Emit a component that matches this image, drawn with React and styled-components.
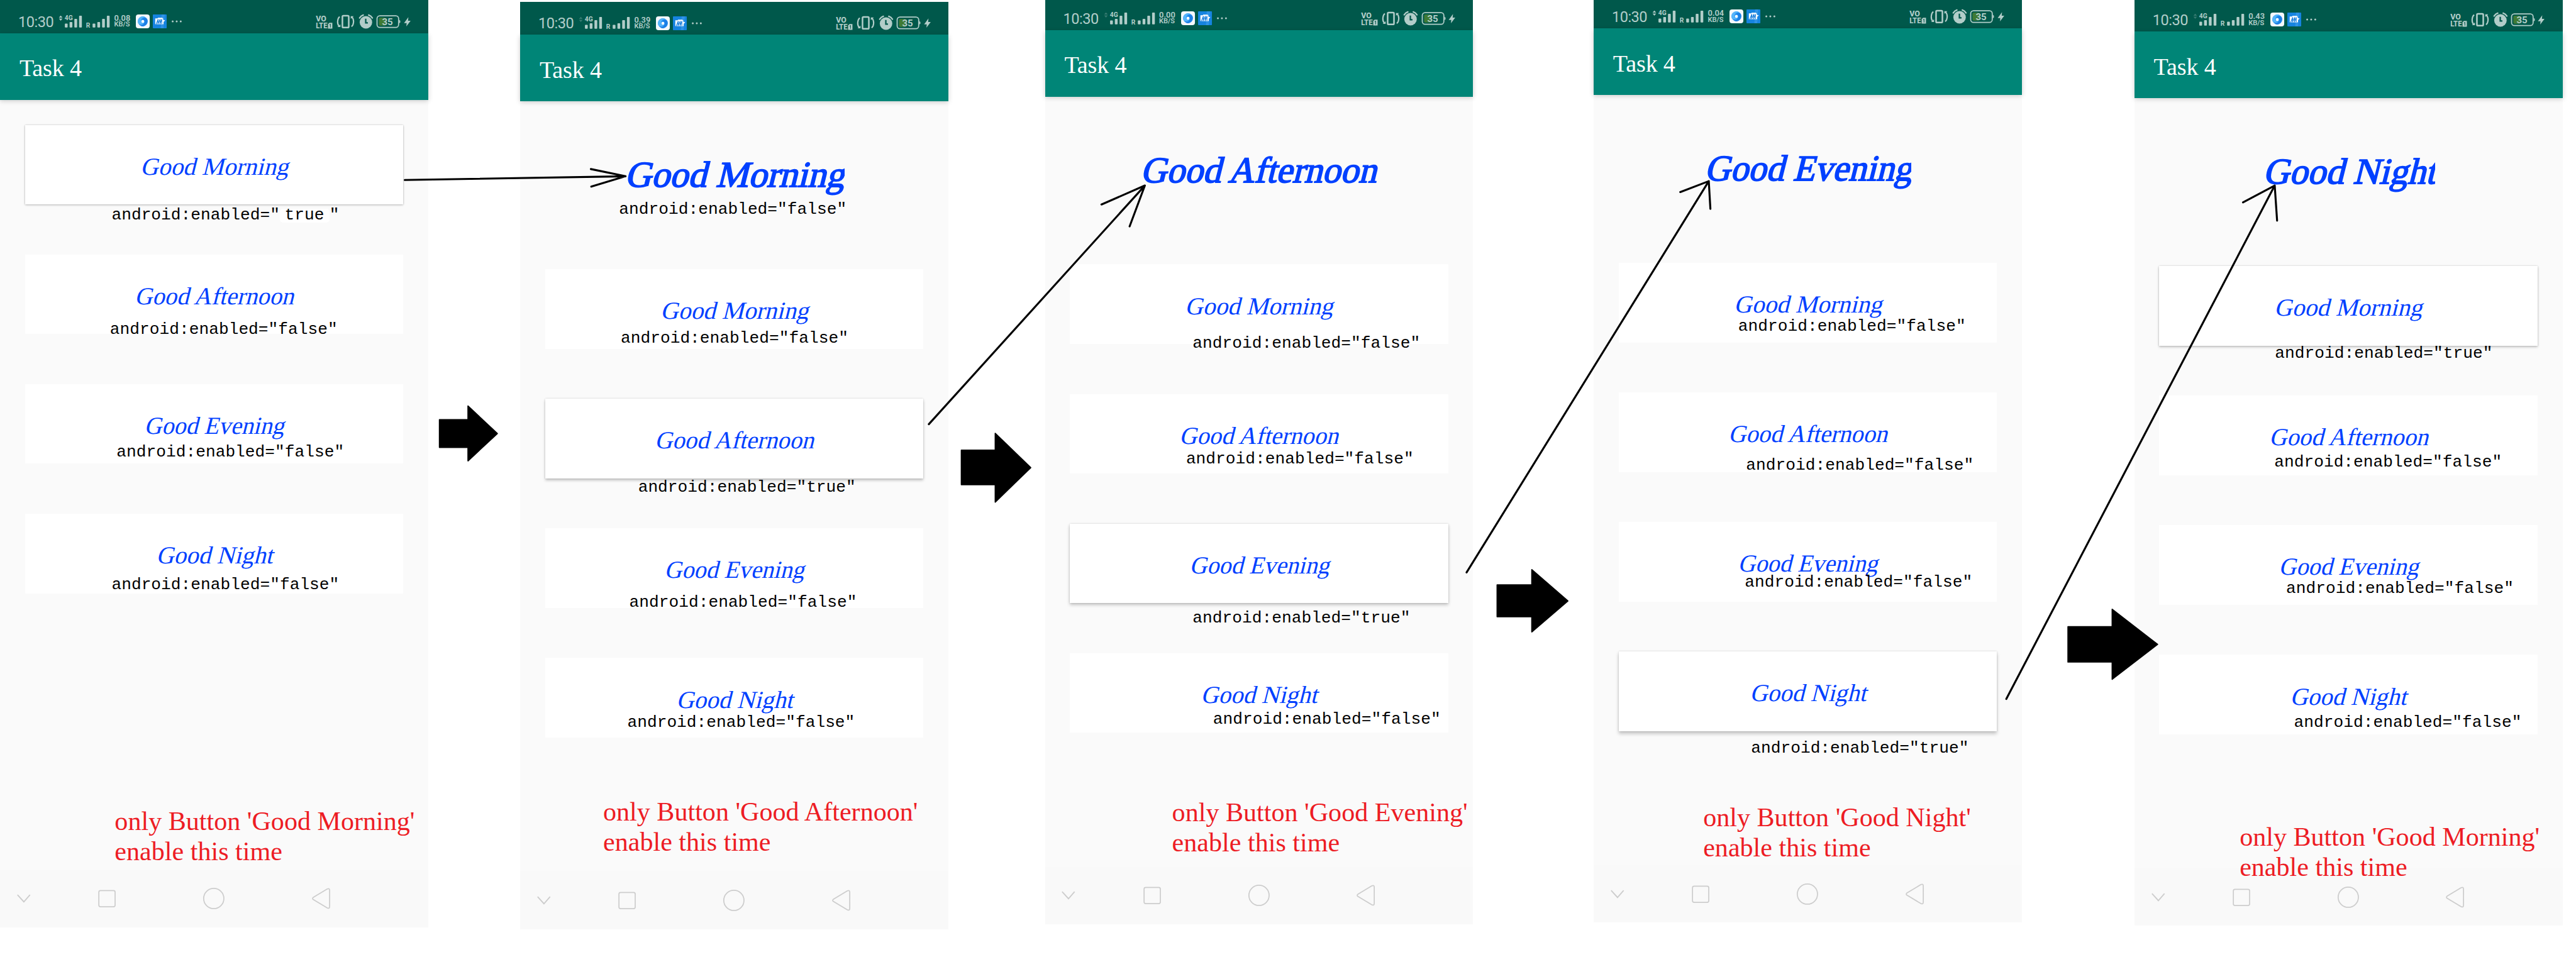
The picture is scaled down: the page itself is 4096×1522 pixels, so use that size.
import React from "react";
import styled, { createGlobalStyle } from "styled-components";

// Every length below is written in design pixels of a 6498px wide board.
const SCALE = 4096 / 6498;
const u = (n) => `${(n * SCALE).toFixed(3)}px`;

const GlobalStyle = createGlobalStyle`
  html, body { margin: 0; padding: 0; background: #fff; }
  * { box-sizing: border-box; }
`;

const serif = `"Liberation Serif", "Times New Roman", serif`;
const mono = `"Liberation Mono", "Courier New", monospace`;
const sans = `Roboto, "Liberation Sans", sans-serif`;
const statusInk = "#b2cdc9";
const statusBg = "#00584b";

const Board = styled.main`
  position: relative;
  width: 4096px;
  height: 1522px;
  overflow: hidden;
  background: #fff;
`;

const PhoneRow = styled.div`
  display: flex;
  align-items: flex-start;
`;

const Phone = styled.section`
  display: flex;
  flex-direction: column;
  flex: none;
  width: ${u(1080)};
  height: ${u(2340)};
  margin-left: ${(p) => u(p.$gap)};
  margin-top: ${(p) => u(p.$rise)};
  background: #fafafa;
`;

const StatusBar = styled.header`
  display: flex;
  flex: none;
  align-items: center;
  justify-content: space-between;
  height: ${u(84)};
  padding: ${u(24)} ${u(44)} 0 ${u(46)};
  background: ${statusBg};
  color: ${statusInk};
  font-family: ${sans};
`;

const StatusGroup = styled.div`
  display: flex;
  align-items: center;
`;

const Clock = styled.span`
  width: ${u(102)};
  font-size: ${u(37.4)};
  line-height: ${u(40)};
  letter-spacing: ${u(-0.8)};
  white-space: nowrap;
  padding-top: ${u(4)};
`;

const Speed = styled.div`
  display: flex;
  flex-direction: column;
  width: ${u(45)};
  margin-left: ${u(10)};
  font-weight: 600;
  white-space: nowrap;
`;

const SpeedValue = styled.span`
  font-size: ${u(20.5)};
  line-height: ${u(18)};
`;

const SpeedUnit = styled.span`
  font-size: ${u(17.6)};
  line-height: ${u(17)};
`;

const Glyph = styled.svg`
  display: block;
  flex: none;
  overflow: visible;
  width: ${(p) => u(p.$w)};
  height: ${(p) => u(p.$h || 36)};
  margin-left: ${(p) => u(p.$ml || 0)};
`;

const AppBar = styled.div`
  display: flex;
  flex: none;
  align-items: center;
  height: ${u(168)};
  padding: ${u(8)} 0 0 ${u(49)};
  background: #008577;
  box-shadow: 0 ${u(3)} ${u(12)} rgba(0, 0, 0, 0.2);
`;

const Title = styled.h1`
  margin: 0;
  color: #fff;
  font: 400 ${u(60.5)} / 1.107 ${serif};
  letter-spacing: ${u(-0.3)};
`;

const Content = styled.div`
  display: flex;
  flex: 1;
  flex-direction: column;
  align-items: center;
  gap: ${u(126)};
  padding-top: ${u(63)};
`;

const Slanted = styled.span`
  display: block;
  color: #0040ff;
  font-family: ${serif};
  line-height: 1.107;
  white-space: nowrap;
`;

const Headline = styled.div`
  display: flex;
  flex: none;
  align-items: center;
  width: ${(p) => u(p.$width)};
  height: ${u(234)};
  padding: ${u(11)} 0 0 ${u(2)};
  overflow: hidden;
`;

const HeadlineText = styled(Slanted)`
  font-size: ${u(92)};
  transform: skewX(-14deg) scaleX(${(p) => p.$stretch});
  transform-origin: 0 80.5%;
  -webkit-text-stroke: ${u(2.8)} #0040ff;
`;

const shadowFor = (lift) =>
  lift
    ? `0 ${u(lift)} ${u(lift + 3)} rgba(0, 0, 0, 0.22), 0 0 ${u(4)} rgba(0, 0, 0, 0.16)`
    : "none";

const GreetingButton = styled.button`
  display: flex;
  flex: none;
  align-items: center;
  justify-content: center;
  width: ${u(954)};
  height: ${u(201)};
  padding: ${u(8)} 0 0;
  border: 0;
  background: #fff;
  box-shadow: ${(p) => shadowFor(p.$lift)};
`;

const ButtonText = styled(Slanted)`
  font-size: ${u(62)};
  transform: skewX(-14deg) scaleX(${(p) => p.$stretch});
  transform-origin: 50% 80.5%;
`;

const NavBar = styled.nav`
  display: flex;
  flex: none;
  align-items: center;
  height: ${u(145)};
  background: #f9f9f9;
`;

const Note = styled.div`
  position: absolute;
  left: ${(p) => u(p.$x - 2)};
  top: ${(p) => u(p.$base - 33)};
  color: #000;
  font: 400 ${u(41.6)} / 1.133 ${mono};
  white-space: pre;
`;

const Patch = styled.span`
  display: inline-block;
  width: ${u(125)};
  padding-left: ${u(12)};
  background: #fff;
  border-radius: ${u(8)};
  line-height: ${u(34)};
`;

const Caption = styled.p`
  position: absolute;
  left: ${(p) => u(p.$x)};
  top: ${(p) => u(p.$base - 59.5)};
  margin: 0;
  color: #ed1c24;
  font: 400 ${u(66.8)} / ${u(76)} ${serif};
  white-space: pre;
`;

const ArrowLayer = styled.svg`
  position: absolute;
  inset: 0;
  width: 4096px;
  height: 1522px;
  pointer-events: none;
`;

const GREETINGS = {
  morning: { text: "Good Morning", stretch: 1.008, width: 556 },
  afternoon: { text: "Good Afternoon", stretch: 0.992, width: 602 },
  evening: { text: "Good Evening", stretch: 0.979, width: 524 },
  night: { text: "Good Night", stretch: 0.997, width: 436 },
};
const ORDER = ["morning", "afternoon", "evening", "night"];

const PHONES = [
  { gap: 0, rise: 0, speed: "0.08", busy: true, enabled: "morning", lift: 2 },
  { gap: 232, rise: 4, speed: "0.39", headline: "morning", enabled: "afternoon", lift: 4 },
  { gap: 244, rise: -8, speed: "0.00", headline: "afternoon", enabled: "evening", lift: 5 },
  { gap: 304, rise: -12, speed: "0.04", busy: true, headline: "evening", enabled: "night", lift: 6 },
  { gap: 284, rise: -4, speed: "0.43", headline: "night", enabled: "morning", lift: 3 },
];

const NOTES = [
  [279.4, 842.6, "false"],
  [296, 1151.8, "false"],
  [283.5, 1486.5, "false"],
  [1563.6, 539.5, "false"],
  [1567.8, 864, "false"],
  [1611.7, 1239.5, "true"],
  [1589.3, 1529.8, "false"],
  [1584.4, 1834, "false"],
  [3010.4, 877, "false"],
  [2993.8, 1168.6, "false"],
  [3010.4, 1570.9, "true"],
  [3061.8, 1826.4, "false"],
  [4386.6, 833.4, "false"],
  [4406.5, 1184, "false"],
  [4403.2, 1479.5, "false"],
  [4419, 1898.4, "true"],
  [5740.6, 903, "true"],
  [5738.9, 1177, "false"],
  [5768.7, 1495.8, "false"],
  [5788.6, 1834, "false"],
];

const CAPTIONS = [
  [289.3, 2093.5, "Good Morning"],
  [1521.4, 2069.5, "Good Afternoon"],
  [2956.5, 2071.8, "Good Evening"],
  [4296.3, 2083.4, "Good Night"],
  [5649.5, 2133.7, "Good Morning"],
];

const BARS = [
  [0, 59],
  [12, 55],
  [24, 47],
  [36, 39],
];

function Bars({ x }) {
  return BARS.map(([dx, top]) => (
    <rect key={dx} x={x + dx} y={top} width="7" height={69 - top} rx="1.6" />
  ));
}

function Signal({ busy }) {
  return (
    <Glyph $w={130} viewBox="148 36 130 36" fill={statusInk} fontFamily="Roboto, sans-serif" fontWeight="700">
      <path d="M149 44l4.6-5.2 4.6 5.2zM149 46.5l4.6 5.2 4.6-5.2z" opacity={busy ? 1 : 0.3} />
      <text x="163.5" y="51" fontSize="17" textLength="20.5" lengthAdjust="spacingAndGlyphs">4G</text>
      <Bars x={164} />
      <text x="217.3" y="69" fontSize="17.6" textLength="10.5" lengthAdjust="spacingAndGlyphs">R</text>
      <Bars x={234} />
    </Glyph>
  );
}

function BrowserIcon() {
  return (
    <Glyph $w={35} $h={35} $ml={10} viewBox="0 0 35 35">
      <rect width="35" height="35" rx="6.5" fill="#f5f8fd" />
      <circle cx="17.5" cy="17.5" r="12.5" fill="#2f9bf5" />
      <path d="M5 17.5A12.5 12.5 0 0 1 25 7.5C19 6 12 10 13 17c0 4 3 7 7 7-7 5-15 1-15-6.5z" fill="#54b4fb" />
      <path d="M28.5 11.5c3 7-1 15.5-8.5 18-7 1.5-10-3-10-5 5 4 13 0 12-7 0-4-4-6-8-4 4-6 12-6 14.5-2z" fill="#1c7fe6" />
      <rect x="14" y="14" width="7" height="7.4" rx="3" fill="#fff" />
    </Glyph>
  );
}

function MusicIcon() {
  return (
    <Glyph $w={35} $h={35} $ml={8} viewBox="0 0 35 35">
      <rect width="35" height="35" rx="1.5" fill="#1684e0" />
      <path d="M22 0h8l-3 35h-7z" fill="#2f93e6" />
      <path d="M6 10h6l1-1.500h11l1 1.500h1v3l2 1.500 3-.5-1.500 2.500-2.500 2v6H6z" fill="#fff" />
      <path d="M8.500 24.500l5-12.500-.5 12 5.500-12-.5 12 4.500-12v12" fill="none" stroke="#1a7fdc" strokeWidth="1.900" />
    </Glyph>
  );
}

function Dots() {
  return (
    <Glyph $w={26} $h={35} $ml={13} viewBox="434 36 26 35" fill={statusInk}>
      <circle cx="436.5" cy="53.4" r="2.4" />
      <circle cx="446.6" cy="53.4" r="2.4" />
      <circle cx="456.8" cy="53.4" r="2.4" />
    </Glyph>
  );
}

function Volte() {
  return (
    <Glyph $w={43} viewBox="795 36 43 36" fill={statusInk} fontFamily="Roboto, sans-serif" fontWeight="800">
      <text x="795.3" y="53" fontSize="20" textLength="26.5" lengthAdjust="spacingAndGlyphs">VO</text>
      <text x="795.3" y="71.6" fontSize="21" textLength="29" lengthAdjust="spacingAndGlyphs">LTE</text>
      <path d="M829.5 57H837v14.7h-11V60.5z" />
      <path d="M829.8 62.3l2.2-1.5v8.2" fill="none" stroke={statusBg} strokeWidth="1.6" />
    </Glyph>
  );
}

function Vibrate() {
  return (
    <Glyph $w={46} viewBox="848 36 46 36" fill="none" stroke={statusInk}>
      <rect x="863" y="39" width="16" height="30" rx="2.5" strokeWidth="4" />
      <path d="M856 41.5C849.5 47 849.5 60 854.5 65.5M886 66.5C892.5 61 892.5 49 887.5 43" strokeWidth="3.4" />
      <path d="M850.5 67.8h7.5v-7zM891.5 40.2h-7.5v7z" fill={statusInk} stroke="none" />
    </Glyph>
  );
}

function Alarm() {
  return (
    <Glyph $w={38} viewBox="904 35 38 36.5">
      <circle cx="922.8" cy="55" r="16" fill={statusInk} />
      <path d="M922.3 46v10.5h5.5" fill="none" stroke={statusBg} strokeWidth="3.6" />
      <path d="M906.5 44q3.5-5.5 9.5-7.5M939.3 44q-3.500-5.500-9.500-7.500" fill="none" stroke={statusInk} strokeWidth="3.600" strokeLinecap="round" />
    </Glyph>
  );
}

function Battery() {
  return (
    <Glyph $w={62} viewBox="949 36 62 36">
      <rect x="956" y="44" width="16.7" height="20" rx="3" fill="#3f7a35" />
      <rect x="951.4" y="39.2" width="54.4" height="29.4" rx="7" fill="none" stroke={statusInk} strokeWidth="2.8" />
      <path d="M1007 49l3 3v4l-3 3z" fill={statusInk} />
      <text x="964" y="63" fill={statusInk} fontFamily="Roboto, sans-serif" fontWeight="700" fontSize="24" textLength="27.5" lengthAdjust="spacingAndGlyphs">35</text>
    </Glyph>
  );
}

function Bolt() {
  return (
    <Glyph $w={18} $ml={7} viewBox="1018 36 18 36" fill={statusInk}>
      <path d="M1029.7 42.7l-11 15h6.6l-.8 8.3 10.8-14.3h-6.5z" />
    </Glyph>
  );
}

const RightIcons = styled(StatusGroup)`
  gap: ${u(9)};
`;

const BatteryGroup = styled(StatusGroup)`
  margin-left: ${u(-2)};
`;

function NavIcons() {
  return (
    <NavBar>
      <Glyph $w={40} $h={60} $ml={39.5} viewBox="39.5 2238 40 60" fill="none" stroke="#cdcdcd" strokeWidth="3">
        <path d="M44 2259l16 17.5 15.5-17.5" />
      </Glyph>
      <Glyph $w={60} $h={60} $ml={160.5} viewBox="240 2238 60 60" fill="none" stroke="#cdcdcd" strokeWidth="2.8">
        <rect x="249.8" y="2248" width="41" height="41" rx="4" />
      </Glyph>
      <Glyph $w={60} $h={60} $ml={210} viewBox="510 2238 60 60" fill="none" stroke="#cdcdcd" strokeWidth="2.8">
        <circle cx="540" cy="2268" r="25.5" />
      </Glyph>
      <Glyph $w={60} $h={60} $ml={210} viewBox="780 2238 60 60" fill="none" stroke="#cdcdcd" strokeWidth="2.8">
        <path d="M789.5 2265.5L825 2244q6-2.5 6 3.5v41q0 6-6 3.5L789.5 2270.5q-3-2.5 0-5z" />
      </Glyph>
    </NavBar>
  );
}

function PhoneScreen({ gap, rise, speed, busy, headline, enabled, lift }) {
  const head = headline && GREETINGS[headline];
  return (
    <Phone $gap={gap} $rise={rise}>
      <StatusBar>
        <StatusGroup>
          <Clock>10:30</Clock>
          <Signal busy={busy} />
          <Speed>
            <SpeedValue>{speed}</SpeedValue>
            <SpeedUnit>KB/S</SpeedUnit>
          </Speed>
          <BrowserIcon />
          <MusicIcon />
          <Dots />
        </StatusGroup>
        <RightIcons>
          <Volte />
          <Vibrate />
          <Alarm />
          <BatteryGroup>
            <Battery />
            <Bolt />
          </BatteryGroup>
        </RightIcons>
      </StatusBar>
      <AppBar>
        <Title>Task 4</Title>
      </AppBar>
      <Content>
        {head && (
          <Headline $width={head.width}>
            <HeadlineText $stretch={head.stretch}>{head.text}</HeadlineText>
          </Headline>
        )}
        {ORDER.map((key) => (
          <GreetingButton key={key} $lift={key === enabled ? lift : 0}>
            <ButtonText $stretch={GREETINGS[key].stretch}>{GREETINGS[key].text}</ButtonText>
          </GreetingButton>
        ))}
      </Content>
      <NavIcons />
    </Phone>
  );
}

function Arrows() {
  return (
    <ArrowLayer viewBox="0 0 6498 2414" preserveAspectRatio="none">
      <g fill="none" stroke="#000" strokeWidth="5" strokeLinecap="round" strokeLinejoin="round">
        <path d="M1021 454L1578 444.6M1490.5 426.5L1578 444.6L1491.5 470.7" />
        <path d="M2343 1070L2888 468M2778.5 515.8L2888 468L2849.5 571" />
        <path d="M3699.5 1444L4310.4 457M4238.5 484.4L4310.4 457L4314.5 527" />
        <path d="M5061 1763L5738 468M5658 510.4L5738 468L5744 556.5" />
      </g>
      <g fill="#000" stroke="#000" strokeWidth="3" strokeLinejoin="round">
        <path d="M1108.5 1058.5H1180.5V1024L1254.5 1093.6L1180.5 1162.5V1128.5H1108.5Z" />
        <path d="M2425 1135.5H2510.5V1093L2600 1179.6L2510.5 1266.5V1222.5H2425Z" />
        <path d="M3776.5 1475.5H3864V1437L3955 1516L3864 1594V1555.5H3776.5Z" />
        <path d="M5216.5 1581H5328V1537L5442.5 1625.5L5328 1713.5V1670H5216.5Z" />
      </g>
    </ArrowLayer>
  );
}

export default function App() {
  return (
    <>
      <GlobalStyle />
      <Board>
        <PhoneRow>
          {PHONES.map((phone, i) => (
            <PhoneScreen key={i} {...phone} />
          ))}
        </PhoneRow>
        <Note $x={283.5} $base={554}>
          android:enabled="<Patch>true</Patch>"
        </Note>
        {NOTES.map(([x, base, value], i) => (
          <Note key={i} $x={x} $base={base}>{`android:enabled="${value}"`}</Note>
        ))}
        {CAPTIONS.map(([x, base, name], i) => (
          <Caption key={i} $x={x} $base={base}>{`only Button '${name}'\nenable this time`}</Caption>
        ))}
        <Arrows />
      </Board>
    </>
  );
}
